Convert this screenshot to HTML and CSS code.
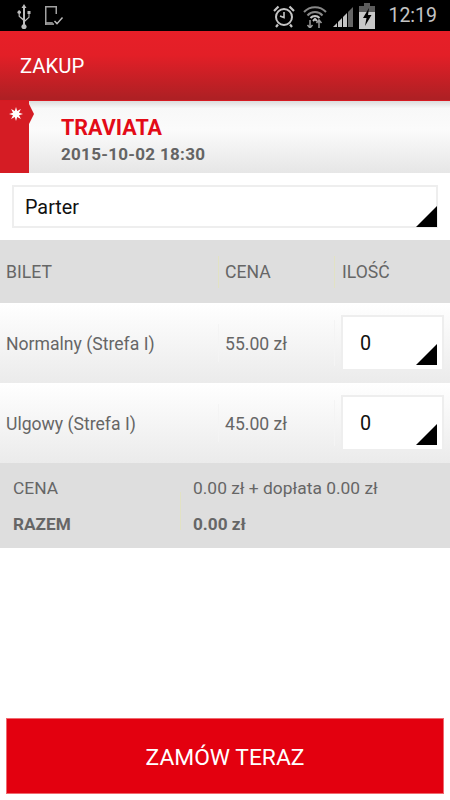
FILE: index.html
```html
<!DOCTYPE html>
<html lang="pl">
<head>
<meta charset="utf-8">
<title>Zakup</title>
<link rel="stylesheet" href="styles.css">
</head>
<body>
<div class="status">
  <div class="status-left">
    <svg class="ic-usb" viewBox="0 0 16 26" width="16" height="26"><path d="M8 1 L10.5 5 H9 V17 L12.5 14 V11 H11.5 V8 H14.5 V11 H13.5 V14.6 L9 18.8 V21.2 A2.6 2.6 0 1 1 7 21.2 V17.5 L2.6 13.6 V10.8 A1.7 1.7 0 1 1 3.8 10.8 V13 L7 15.6 V5 H5.5 Z" fill="#bdbdbd"/></svg>
    <svg class="ic-dev" viewBox="0 0 20 24" width="20" height="24"><path d="M1 2 H13 V10 H11.5 V3.5 H2.5 V18 H8 L10 20 V21 H1 Z" fill="#a2a2a2"/><path d="M2.5 18 H8 L10 20 V21 H2.5 Z" fill="#8a8a8a"/><path d="M10.5 17 L13 19.6 L18.5 13.5" fill="none" stroke="#bdbdbd" stroke-width="1.4"/></svg>
  </div>
  <div class="status-right">
    <svg viewBox="0 0 24 24" width="24" height="24"><circle cx="12" cy="13" r="8" fill="none" stroke="#c4c4c4" stroke-width="2"/><path d="M12 8 V13.5 L8 12" fill="none" stroke="#c4c4c4" stroke-width="1.6"/><path d="M2 7 L6.5 2.5 M22 7 L17.5 2.5 M6 20.5 L4 23 M18 20.5 L20 23" stroke="#c4c4c4" stroke-width="2.2"/></svg>
    <svg viewBox="0 0 24 24" width="24" height="24"><path d="M1 8 A15 15 0 0 1 23 8 M4.5 11.5 A10 10 0 0 1 19.5 11.5" fill="none" stroke="#888" stroke-width="2"/><path d="M7.5 14 A6 6 0 0 1 16.5 14 M10 17 L12 15 L14 17" fill="none" stroke="#c4c4c4" stroke-width="2"/><path d="M7 16 V24 M4.5 21 L7 24 L9.5 21 M16 24 V16 M13.5 19 L16 16 L18.5 19" fill="none" stroke="#9a9a9a" stroke-width="1.5"/></svg>
    <svg viewBox="0 0 20 22" width="20" height="22"><path d="M0 22 L4 18 V22 Z M5 22 V17 L9 13 V22 Z M10 22 V12 L14 8 V22 Z" fill="#c4c4c4"/><path d="M15 22 V7 L20 2 V22 Z" fill="#666"/></svg>
    <svg viewBox="0 0 16 26" width="16" height="26"><path d="M5 0 H11 V3 H16 V26 H0 V3 H5 Z" fill="#5c5c5c"/><path d="M0 9 H16 V26 H0 Z" fill="#c8c8c8"/><path d="M10 5 L4 15 H7.5 L6 23 L12.5 12 H9 Z" fill="#000"/></svg>
    <span class="clock">12:19</span>
  </div>
</div>
<header class="appbar">ZAKUP</header>
<section class="event">
  <div class="ribbon">
    <svg class="star" viewBox="0 0 14 14" width="14" height="14"><path d="M7 0 L8.2 4 L11.9 2.1 L10 5.8 L14 7 L10 8.2 L11.9 11.9 L8.2 10 L7 14 L5.8 10 L2.1 11.9 L4 8.2 L0 7 L4 5.8 L2.1 2.1 L5.8 4 Z" fill="#fff"/></svg>
  </div>
  <div class="event-text">
    <div class="event-title">TRAVIATA</div>
    <div class="event-date">2015-10-02 18:30</div>
  </div>
</section>
<div class="select-wrap">
  <div class="select sel-wide">Parter</div>
</div>
<div class="row head">
  <div class="c1">BILET</div>
  <div class="c2 sep">CENA</div>
  <div class="c3 sep">ILOŚĆ</div>
</div>
<div class="row ticket">
  <div class="c1">Normalny (Strefa I)</div>
  <div class="c2 sep faint">55.00 zł</div>
  <div class="c3 sep faint tall"><div class="select qty">0</div></div>
</div>
<div class="row ticket">
  <div class="c1">Ulgowy (Strefa I)</div>
  <div class="c2 sep faint">45.00 zł</div>
  <div class="c3 sep faint tall"><div class="select qty">0</div></div>
</div>
<div class="summary">
  <div class="sum-labels">
    <div>CENA</div>
    <div class="bold">RAZEM</div>
  </div>
  <div class="sum-values">
    <div>0.00 zł + dopłata 0.00 zł</div>
    <div class="bold">0.00 zł</div>
  </div>
</div>
<div class="spacer"></div>
<button class="order">ZAMÓW TERAZ</button>
</body>
</html>
```
FILE: styles.css
```css
* { box-sizing: border-box; }
html, body { margin: 0; padding: 0; }
body {
  width: 450px;
  height: 800px;
  display: flex;
  flex-direction: column;
  background: #fff;
  font-family: Roboto, "Liberation Sans", sans-serif;
  color: #666;
  overflow: hidden;
}
.status {
  height: 31px;
  flex: none;
  background: #000;
  display: flex;
  justify-content: space-between;
  align-items: center;
  padding: 0 13px 0 16px;
}
.status-left { display: flex; align-items: center; gap: 12px; }
.status-right { display: flex; align-items: center; gap: 6px; }
.status-right svg:nth-child(1) { margin-right: 1px; }
.clock { font-size: 19.5px; color: #c4c4c4; margin-left: 7px; line-height: 24px; }
.appbar {
  height: 70px;
  flex: none;
  background: linear-gradient(#e71f28 0%, #e31f27 35%, #ae2024 98%);
  border-bottom: 1px solid #d51a22;
  color: #fff;
  font-size: 20.3px;
  display: flex;
  align-items: center;
  padding-left: 20px;
}
.event {
  height: 72px;
  flex: none;
  display: flex;
  background: linear-gradient(#dcdcdc 0, #f8f8f8 10%, #fbfbfb 40%, #e6e6e6 100%);
}
.ribbon {
  width: 29px;
  flex: none;
  background: #d51c24;
  position: relative;
  padding: 6px 0 0 9px;
}
.ribbon::after {
  content: "";
  position: absolute;
  left: 29px;
  top: 3px;
  border-left: 5px solid #d51c24;
  border-top: 10px solid transparent;
  border-bottom: 10px solid transparent;
}
.star { display: block; }
.event-text { padding: 14px 0 0 32px; font-weight: 700; }
.event-title { color: #e30b17; font-size: 21.5px; line-height: 25px; }
.event-date { color: #646464; font-size: 17px; line-height: 22px; margin-top: 3px; letter-spacing: .3px; }
.select-wrap { height: 67px; flex: none; padding: 12px; }
.select {
  position: relative;
  background: #fff;
  border: 2px solid #eeeeee;
  color: #111;
  font-size: 19.8px;
  display: flex;
  align-items: center;
}
.select::after {
  content: "";
  position: absolute;
  right: -1px;
  bottom: -1px;
  border-style: solid;
  border-width: 0 0 21px 21px;
  border-color: transparent transparent #000 transparent;
}
.sel-wide { width: 426px; height: 43px; padding: 2px 0 0 11px; }
.row { display: flex; align-items: center; flex: none; }
.head { height: 63px; background: #dedede; font-size: 17.6px; }
.ticket { height: 80px; background: linear-gradient(#ffffff, #ebebeb); font-size: 17.6px; }
.ticket .c1 { padding-top: 2px; }
.c1 { width: 218px; padding-left: 6px; white-space: nowrap; }
.c2 { width: 116px; padding-left: 6px; white-space: nowrap; }
.c3 { width: 116px; padding-left: 7px; }
.sep { border-left: 1px solid #e2e2c4; height: 32px; display: flex; align-items: center; }
.sep.faint { border-left-color: #f4f4f4; height: 38px; padding-top: 2px; }
.sep.tall { height: 46px; padding: 0 0 0 6px; }
.qty { width: 103px; height: 56px; flex: none; padding-left: 17px; }
.qty::after { right: 5px; bottom: 4px; }
.summary {
  height: 85px;
  flex: none;
  background: #dedede;
  display: flex;
  font-size: 17.4px;
}
.summary .bold { font-weight: 700; font-size: 17.2px; }
.sum-labels { width: 180px; padding: 15px 0 0 13px; line-height: 21px; }
.sum-labels div + div, .sum-values div + div { margin-top: 15px; }
.sum-values { padding: 15px 0 0 13px; line-height: 21px; position: relative; }
.sum-values::before {
  content: "";
  position: absolute;
  left: 0;
  top: 29px;
  height: 38px;
  border-left: 1px solid #e2e2c4;
}
.spacer { flex: 1; }
.order {
  flex: none;
  margin: 0 6px 6px;
  height: 76px;
  width: 438px;
  background: #e3000f;
  border: 1px solid #ef6a70;
  color: #fff;
  font-family: inherit;
  font-size: 22.8px;
  padding: 2px 0 0;
}
```
